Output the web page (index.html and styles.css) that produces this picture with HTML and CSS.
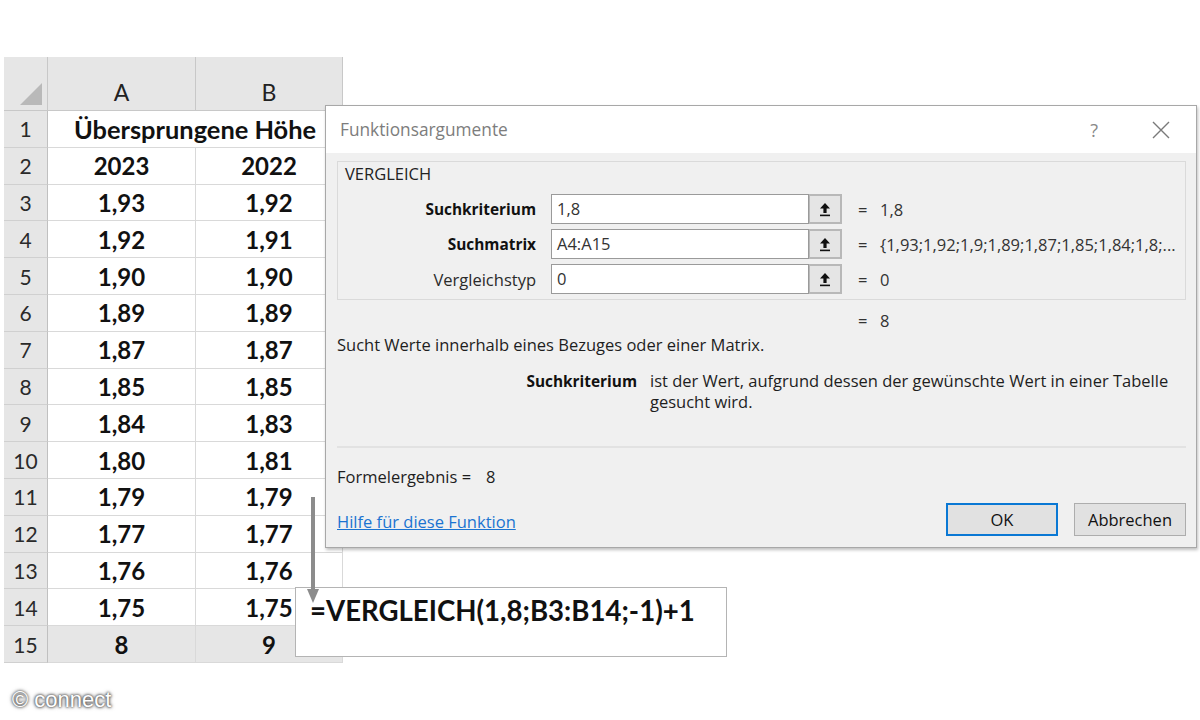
FILE: index.html
```html
<!DOCTYPE html>
<html lang="de">
<head>
<meta charset="utf-8">
<title>VERGLEICH</title>
<link rel="stylesheet" href="styles.css">
</head>
<body>
<div class="canvas">
  <div class="sheet">
    <div class="corner"><span class="tri"></span></div>
    <div class="colhead">A</div>
    <div class="colhead">B</div>

    <div class="rowhead">1</div><div class="cell merged">Übersprungene Höhe</div>
    <div class="rowhead">2</div><div class="cell">2023</div><div class="cell">2022</div>
    <div class="rowhead">3</div><div class="cell">1,93</div><div class="cell">1,92</div>
    <div class="rowhead">4</div><div class="cell">1,92</div><div class="cell">1,91</div>
    <div class="rowhead">5</div><div class="cell">1,90</div><div class="cell">1,90</div>
    <div class="rowhead">6</div><div class="cell">1,89</div><div class="cell">1,89</div>
    <div class="rowhead">7</div><div class="cell">1,87</div><div class="cell">1,87</div>
    <div class="rowhead">8</div><div class="cell">1,85</div><div class="cell">1,85</div>
    <div class="rowhead">9</div><div class="cell">1,84</div><div class="cell">1,83</div>
    <div class="rowhead">10</div><div class="cell">1,80</div><div class="cell">1,81</div>
    <div class="rowhead">11</div><div class="cell">1,79</div><div class="cell">1,79</div>
    <div class="rowhead">12</div><div class="cell">1,77</div><div class="cell">1,77</div>
    <div class="rowhead">13</div><div class="cell">1,76</div><div class="cell">1,76</div>
    <div class="rowhead">14</div><div class="cell">1,75</div><div class="cell">1,75</div>
    <div class="rowhead">15</div><div class="cell total">8</div><div class="cell total">9</div>
  </div>

  <div class="formula">=VERGLEICH(1,8;B3:B14;-1)+1</div>

  <svg class="pointer" width="14" height="110" viewBox="0 0 14 110">
    <rect x="5" y="0" width="4" height="96" fill="#8c8c8c"/>
    <path d="M1 92 L13 92 L7 106 Z" fill="#8c8c8c"/>
  </svg>

  <div class="dialog">
    <div class="titlebar">
      <span class="title">Funktionsargumente</span>
      <span class="help">?</span>
      <svg class="close" width="18" height="18" viewBox="0 0 18 18">
        <path d="M1 1 L17 17 M17 1 L1 17" stroke="#7a7a7a" stroke-width="1.4" fill="none"/>
      </svg>
    </div>
    <div class="dbody">
      <div class="group">
        <div class="fname">VERGLEICH</div>
        <div class="argrow">
          <span class="arglabel strong">Suchkriterium</span>
          <span class="input">1,8</span>
          <span class="refbtn"><svg width="12" height="15" viewBox="0 0 12 15"><path d="M6 1 L11 6.5 H7.6 V11 H4.4 V6.5 H1 Z" fill="#111"/><rect x="1" y="12.6" width="10" height="1.6" fill="#111"/></svg></span>
          <span class="eq">=</span>
          <span class="val">1,8</span>
        </div>
        <div class="argrow">
          <span class="arglabel strong">Suchmatrix</span>
          <span class="input">A4:A15</span>
          <span class="refbtn"><svg width="12" height="15" viewBox="0 0 12 15"><path d="M6 1 L11 6.5 H7.6 V11 H4.4 V6.5 H1 Z" fill="#111"/><rect x="1" y="12.6" width="10" height="1.6" fill="#111"/></svg></span>
          <span class="eq">=</span>
          <span class="val">{1,93;1,92;1,9;1,89;1,87;1,85;1,84;1,8;...</span>
        </div>
        <div class="argrow">
          <span class="arglabel">Vergleichstyp</span>
          <span class="input">0</span>
          <span class="refbtn"><svg width="12" height="15" viewBox="0 0 12 15"><path d="M6 1 L11 6.5 H7.6 V11 H4.4 V6.5 H1 Z" fill="#111"/><rect x="1" y="12.6" width="10" height="1.6" fill="#111"/></svg></span>
          <span class="eq">=</span>
          <span class="val">0</span>
        </div>
      </div>
      <div class="resultrow"><span class="eq">=</span><span class="val">8</span></div>
      <div class="desc">Sucht Werte innerhalb eines Bezuges oder einer Matrix.</div>
      <div class="argdesc">
        <span class="adlabel">Suchkriterium</span>
        <span class="adtext">ist der Wert, aufgrund dessen der gewünschte Wert in einer Tabelle<br>gesucht wird.</span>
      </div>
      <div class="sep"></div>
      <div class="formres"><span>Formelergebnis =</span><span class="frval">8</span></div>
      <div class="footer">
        <a class="link" href="#">Hilfe für diese Funktion</a>
        <span class="btn ok">OK</span>
        <span class="btn">Abbrechen</span>
      </div>
    </div>
  </div>

  <div class="watermark">© connect</div>
</div>
</body>
</html>
```

FILE: styles.css
```css
html, body {
  margin: 0;
  padding: 0;
  background: #ffffff;
}

.canvas {
  position: relative;
  width: 1200px;
  height: 720px;
  overflow: hidden;
  background: #ffffff;
}

/* ---------- spreadsheet ---------- */
.sheet {
  margin-left: 4px;
  padding-top: 57px;
  display: grid;
  grid-template-columns: 44px 148px 147px;
  grid-template-rows: 54px repeat(15, 36.8px);
  width: 339px;
  font-family: Lato, "Liberation Sans", sans-serif;
  color: #111111;
}

.corner {
  position: relative;
  background: #e6e6e6;
  border-right: 1px solid #c8c8c8;
  border-bottom: 1px solid #c8c8c8;
}

.tri {
  position: absolute;
  right: 5px;
  bottom: 5px;
  width: 0;
  height: 0;
  border-left: 22px solid transparent;
  border-bottom: 22px solid #b9b9b9;
}

.colhead {
  background: #e6e6e6;
  border-right: 1px solid #c8c8c8;
  border-bottom: 1px solid #c8c8c8;
  display: flex;
  align-items: center;
  justify-content: center;
  font-size: 23px;
  padding-top: 16px;
  box-sizing: border-box;
  color: #222;
}

.rowhead {
  background: #e6e6e6;
  border-right: 1px solid #c0c0c0;
  border-bottom: 1px solid #d0d0d0;
  display: flex;
  align-items: center;
  justify-content: center;
  font-size: 21px;
  color: #2a2a2a;
  box-sizing: border-box;
}

.cell {
  border-right: 1px solid #d9d9d9;
  border-bottom: 1px solid #d9d9d9;
  display: flex;
  align-items: center;
  justify-content: center;
  font-weight: 700;
  font-size: 24px;
  box-sizing: border-box;
}

.cell.merged {
  grid-column: span 2;
  font-size: 25.4px;
}

.cell.total {
  background: #e6e6e6;
}

/* ---------- overlay pointer & formula ---------- */
.pointer {
  position: absolute;
  left: 306px;
  top: 497px;
}

.formula {
  position: absolute;
  left: 295px;
  top: 587px;
  width: 432px;
  height: 70px;
  box-sizing: border-box;
  border: 1px solid #b4b4b4;
  background: #ffffff;
  padding: 6px 0 0 14px;
  font-family: Lato, "Liberation Sans", sans-serif;
  font-weight: 700;
  font-size: 27.6px;
  color: #111111;
}

/* ---------- dialog ---------- */
.dialog {
  position: absolute;
  left: 325px;
  top: 105px;
  width: 872px;
  height: 443px;
  box-sizing: border-box;
  border: 1px solid #a8a8a8;
  background: #f0f0f0;
  box-shadow: 1px 2px 3px rgba(0, 0, 0, 0.25);
  font-family: "Open Sans", "Noto Sans", sans-serif;
  font-size: 16.5px;
  color: #1e1e1e;
}

.titlebar {
  height: 47px;
  background: #ffffff;
  display: flex;
  align-items: center;
  padding-left: 14px;
}

.title {
  font-size: 17.3px;
  color: #7d7d7d;
  flex: 1;
}

.help {
  font-size: 18px;
  color: #888888;
  margin-right: 54px;
}

.close {
  margin-right: 26px;
}

.dbody {
  padding: 8px 10px 0 11px;
}

.group {
  height: 139px;
  box-sizing: border-box;
  border: 1px solid #dadada;
  padding: 1px 0 0 0;
}

.fname {
  padding-left: 7px;
  height: 31px;
  line-height: 22px;
  color: #222;
}

.argrow {
  display: flex;
  align-items: center;
  height: 30px;
  margin-bottom: 5px;
}

.arglabel {
  width: 198px;
  text-align: right;
  color: #2a2a2a;
}

.strong {
  font-weight: 700;
  font-size: 15.4px;
  color: #111;
}

.input {
  margin-left: 15px;
  width: 258px;
  height: 30px;
  box-sizing: border-box;
  border: 1px solid #9a9a9a;
  background: #ffffff;
  padding-left: 5px;
  line-height: 28px;
  color: #333;
}

.refbtn {
  width: 33px;
  height: 30px;
  box-sizing: border-box;
  border: 2px solid #b8b8b8;
  border-left-width: 1px;
  background: #e5e5e5;
  display: flex;
  align-items: center;
  justify-content: center;
}

.eq {
  margin-left: 16px;
  width: 22px;
  color: #333;
}

.val {
  color: #333;
  white-space: nowrap;
}

.resultrow {
  display: flex;
  align-items: center;
  height: 22px;
  margin-top: 9px;
  padding-left: 505px;
}

.desc {
  margin-top: 3px;
  height: 22px;
  line-height: 22px;
}

.argdesc {
  display: flex;
  align-items: baseline;
  margin-top: 14px;
  line-height: 21px;
}

.adlabel {
  width: 300px;
  text-align: right;
  font-weight: 700;
  font-size: 15.4px;
  color: #111;
}

.adtext {
  margin-left: 13px;
}

.sep {
  margin-top: 34px;
  height: 2px;
  background: #e2e2e2;
}

.formres {
  margin-top: 18px;
  height: 22px;
  line-height: 22px;
  display: flex;
}

.frval {
  margin-left: 15px;
}

.footer {
  display: flex;
  align-items: center;
  margin-top: 15px;
  height: 33px;
}

.link {
  flex: 1;
  color: #1b74d1;
  text-decoration: underline;
  padding-top: 4px;
}

.btn {
  width: 112px;
  height: 33px;
  box-sizing: border-box;
  border: 1px solid #adadad;
  background: #e1e1e1;
  display: flex;
  align-items: center;
  justify-content: center;
  color: #111;
  margin-left: 16px;
}

.btn.ok {
  border: 2px solid #0a78d4;
  width: 112px;
}

/* ---------- watermark ---------- */
.watermark {
  position: absolute;
  left: 12px;
  top: 687px;
  font-family: "Liberation Sans", Arial, sans-serif;
  font-size: 22px;
  color: #ffffff;
  text-shadow: 0 0 2px #555, 0 0 3px #555, 0 0 4px #777;
}
```
